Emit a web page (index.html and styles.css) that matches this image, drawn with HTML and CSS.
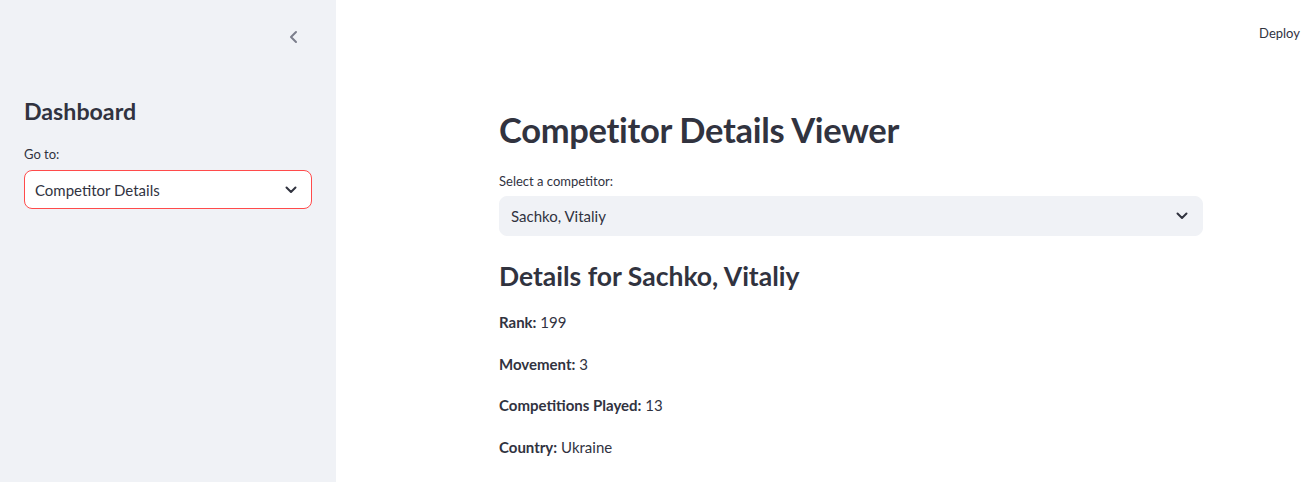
FILE: index.html
```html
<!DOCTYPE html>
<html>
<head>
<meta charset="utf-8">
<link rel="stylesheet" href="styles.css">
</head>
<body>
<div class="app">
  <aside class="sidebar">
    <div class="sb-top">
      <button class="collapse" aria-label="Collapse sidebar">
        <svg width="12" height="14" viewBox="0 0 12 14"><path d="M8 2 L3 7 L8 12" fill="none" stroke="#7c7e8c" stroke-width="2" stroke-linecap="round" stroke-linejoin="round"/></svg>
      </button>
    </div>
    <h2 class="sb-title">Dashboard</h2>
    <div class="field-label side-label">Go to:</div>
    <div class="select select-side">
      <span>Competitor Details</span>
      <svg class="chev" width="12" height="8" viewBox="0 0 12 8"><path d="M1.5 1.5 L6 6 L10.5 1.5" fill="none" stroke="#31333f" stroke-width="2" stroke-linecap="round" stroke-linejoin="round"/></svg>
    </div>
  </aside>
  <main class="main">
    <header class="topbar"><span class="deploy">Deploy</span></header>
    <section class="content">
      <h1 class="title">Competitor Details Viewer</h1>
      <div class="field-label main-label">Select a competitor:</div>
      <div class="select select-main">
        <span>Sachko, Vitaliy</span>
        <svg class="chev" width="12" height="8" viewBox="0 0 12 8"><path d="M1.5 1.5 L6 6 L10.5 1.5" fill="none" stroke="#31333f" stroke-width="2" stroke-linecap="round" stroke-linejoin="round"/></svg>
      </div>
      <h2 class="subtitle">Details for Sachko, Vitaliy</h2>
      <p class="row"><b>Rank:</b> 199</p>
      <p class="row"><b>Movement:</b> 3</p>
      <p class="row"><b>Competitions Played:</b> 13</p>
      <p class="row"><b>Country:</b> Ukraine</p>
    </section>
  </main>
</div>
</body>
</html>
```
FILE: styles.css
```css
* { box-sizing: border-box; }
html, body { margin: 0; padding: 0; }
body {
  font-family: "Lato", "Noto Sans", sans-serif;
  color: #31333f;
  background: #ffffff;
}
.app { display: flex; height: 482px; overflow: hidden; }
.sidebar {
  width: 336px;
  flex: 0 0 336px;
  background: #f0f2f6;
  padding: 0 24px;
}
.sb-top {
  height: 95px;
  display: flex;
  justify-content: flex-end;
  align-items: flex-start;
  padding-top: 30px;
}
.collapse {
  border: 0; background: transparent; padding: 0;
  width: 16px; height: 14px;
  margin-right: 10px;
  display: flex; align-items: center; justify-content: center;
}
.sb-title {
  margin: 0;
  font-size: 23.2px;
  font-weight: 700;
  line-height: 32px;
  height: 32px;
}
.field-label {
  font-size: 13px;
  line-height: 18px;
}
.side-label { margin: 18px 0 7px; }
.select {
  display: flex;
  align-items: center;
  justify-content: space-between;
  height: 40px;
  border-radius: 8px;
  padding: 0 14px 0 10px;
  font-size: 15px;
}
.select-side {
  background: #ffffff;
  border: 1px solid #ff4b4b;
  height: 39px;
}
.select-main {
  background: #f0f2f6;
  border: 1px solid #f0f2f6;
  padding-left: 11px;
}
.main { flex: 1; display: flex; flex-direction: column; }
.topbar {
  height: 74px;
  display: flex;
  justify-content: flex-end;
  align-items: flex-start;
  padding: 25px 10px 0 0;
}
.deploy { font-size: 13px; line-height: 16px; }
.content {
  width: 704px;
  margin-left: 163px;
}
.title {
  margin: 30px 0 0;
  font-size: 34.5px;
  font-weight: 700;
  line-height: 52px;
  letter-spacing: -0.3px;
}
.main-label { margin: 16px 0 6px; }
.subtitle {
  margin: 20px 0 0;
  font-size: 26.5px;
  font-weight: 700;
  line-height: 40px;
}
.row {
  margin: 0;
  font-size: 15px;
  line-height: 41.7px;
}
.row:first-of-type { margin-top: 6px; }
.row b { font-weight: 700; }
```
